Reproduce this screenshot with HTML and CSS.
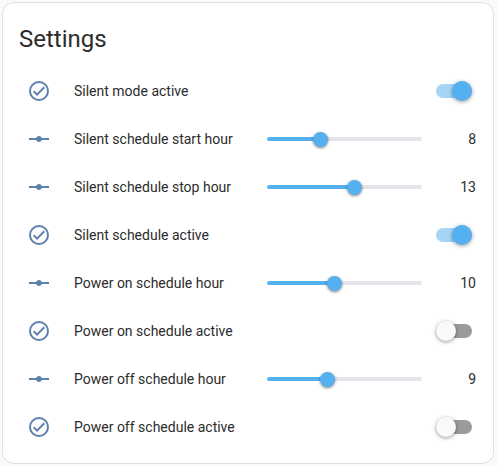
FILE: index.html
```html
<!DOCTYPE html>
<html lang="en">
<head>
<meta charset="utf-8">
<meta name="viewport" content="width=device-width, initial-scale=1">
<title>Settings</title>
<link rel="stylesheet" href="styles.css">
</head>
<body>
<svg class="sprite" aria-hidden="true">
  <symbol id="check" viewBox="0 0 24 24"><path d="M12 2A10 10 0 0 0 2 12A10 10 0 0 0 12 22A10 10 0 0 0 22 12A10 10 0 0 0 12 2M12 20A8 8 0 1 1 12 4A8 8 0 0 1 12 20M16.59 7.58L10 14.17L7.41 11.59L6 13L10 17L18 9L16.59 7.58Z"/></symbol>
  <symbol id="slider" viewBox="0 0 24 24"><path d="M2 11H9.17C9.58 9.83 10.69 9 12 9C13.31 9 14.42 9.83 14.83 11H22V13H14.83C14.42 14.17 13.31 15 12 15C10.69 15 9.58 14.17 9.17 13H2V11Z"/></symbol>
</svg>
<main class="card">
  <h1 class="title">Settings</h1>
  <div class="rows">
    <div class="row">
      <svg class="icon" aria-hidden="true"><use href="#check"/></svg>
      <label class="name" for="silent-mode">Silent mode active</label>
      <input class="switch" id="silent-mode" type="checkbox" checked>
    </div>
    <div class="row">
      <svg class="icon" aria-hidden="true"><use href="#slider"/></svg>
      <label class="name" for="silent-start">Silent schedule start hour</label>
      <div class="track" style="--fill: calc(100% * 8 / 23)"><input class="range" id="silent-start" type="range" min="0" max="23" value="8"></div>
      <output class="value" for="silent-start">8</output>
    </div>
    <div class="row">
      <svg class="icon" aria-hidden="true"><use href="#slider"/></svg>
      <label class="name" for="silent-stop">Silent schedule stop hour</label>
      <div class="track" style="--fill: calc(100% * 13 / 23)"><input class="range" id="silent-stop" type="range" min="0" max="23" value="13"></div>
      <output class="value" for="silent-stop">13</output>
    </div>
    <div class="row">
      <svg class="icon" aria-hidden="true"><use href="#check"/></svg>
      <label class="name" for="silent-schedule">Silent schedule active</label>
      <input class="switch" id="silent-schedule" type="checkbox" checked>
    </div>
    <div class="row">
      <svg class="icon" aria-hidden="true"><use href="#slider"/></svg>
      <label class="name" for="power-on-hour">Power on schedule hour</label>
      <div class="track" style="--fill: calc(100% * 10 / 23)"><input class="range" id="power-on-hour" type="range" min="0" max="23" value="10"></div>
      <output class="value" for="power-on-hour">10</output>
    </div>
    <div class="row">
      <svg class="icon" aria-hidden="true"><use href="#check"/></svg>
      <label class="name" for="power-on">Power on schedule active</label>
      <input class="switch" id="power-on" type="checkbox">
    </div>
    <div class="row">
      <svg class="icon" aria-hidden="true"><use href="#slider"/></svg>
      <label class="name" for="power-off-hour">Power off schedule hour</label>
      <div class="track" style="--fill: calc(100% * 9 / 23)"><input class="range" id="power-off-hour" type="range" min="0" max="23" value="9"></div>
      <output class="value" for="power-off-hour">9</output>
    </div>
    <div class="row">
      <svg class="icon" aria-hidden="true"><use href="#check"/></svg>
      <label class="name" for="power-off">Power off schedule active</label>
      <input class="switch" id="power-off" type="checkbox">
    </div>
  </div>
</main>
</body>
</html>
```
FILE: styles.css
```css
* {
  box-sizing: border-box;
}

body {
  margin: 0;
  padding: 2px 3px 2px 2px;
  background: #fafafa;
  color: #2c2c2c;
  font-family: Roboto, "Liberation Sans", sans-serif;
  font-size: 14px;
  line-height: 20px;
}

.sprite {
  display: none;
}

.card {
  background: #fff;
  border: 1px solid #e0e0e0;
  border-radius: 12px;
  padding: 12px 17px 12px 16px;
}

.title {
  margin: 0;
  padding: 8px 0 12px;
  font-size: 24px;
  font-weight: 400;
  line-height: 32px;
}

.row {
  display: flex;
  align-items: center;
  height: 48px;
}

.icon {
  flex: none;
  width: 24px;
  height: 24px;
  margin: 0 23px 0 8px;
  fill: #5b80aa;
}

.name {
  flex: none;
  width: 193px;
  white-space: nowrap;
}

.track {
  display: flex;
  flex: 1;
  align-items: center;
  height: 4px;
  border-radius: 2px;
  background: linear-gradient(to right, #54b0ef var(--fill), #e4e4ea var(--fill));
}

.range {
  appearance: none;
  flex: 1;
  min-width: 0;
  height: 20px;
  margin: 0 -8px;
  background: transparent;
}

.range::-webkit-slider-thumb {
  appearance: none;
  width: 15px;
  height: 15px;
  border-radius: 50%;
  background: #54b0ef;
  box-shadow: 0 1px 3px rgba(0, 0, 0, 0.5);
}

.value {
  width: 54px;
  text-align: right;
}

.switch {
  appearance: none;
  display: flex;
  align-items: center;
  width: 36px;
  height: 14px;
  margin: 0 4px 0 auto;
  border-radius: 7px;
  background: #9b9b9b;
}

.switch::before {
  content: "";
  width: 20px;
  height: 20px;
  flex: none;
  border-radius: 50%;
  background: #fafafa;
  box-shadow: 0 1px 4px rgba(0, 0, 0, 0.4);
}

.switch:checked {
  justify-content: flex-end;
  background: #a5d6f7;
}

.switch:checked::before {
  background: #54b0ef;
}
```
